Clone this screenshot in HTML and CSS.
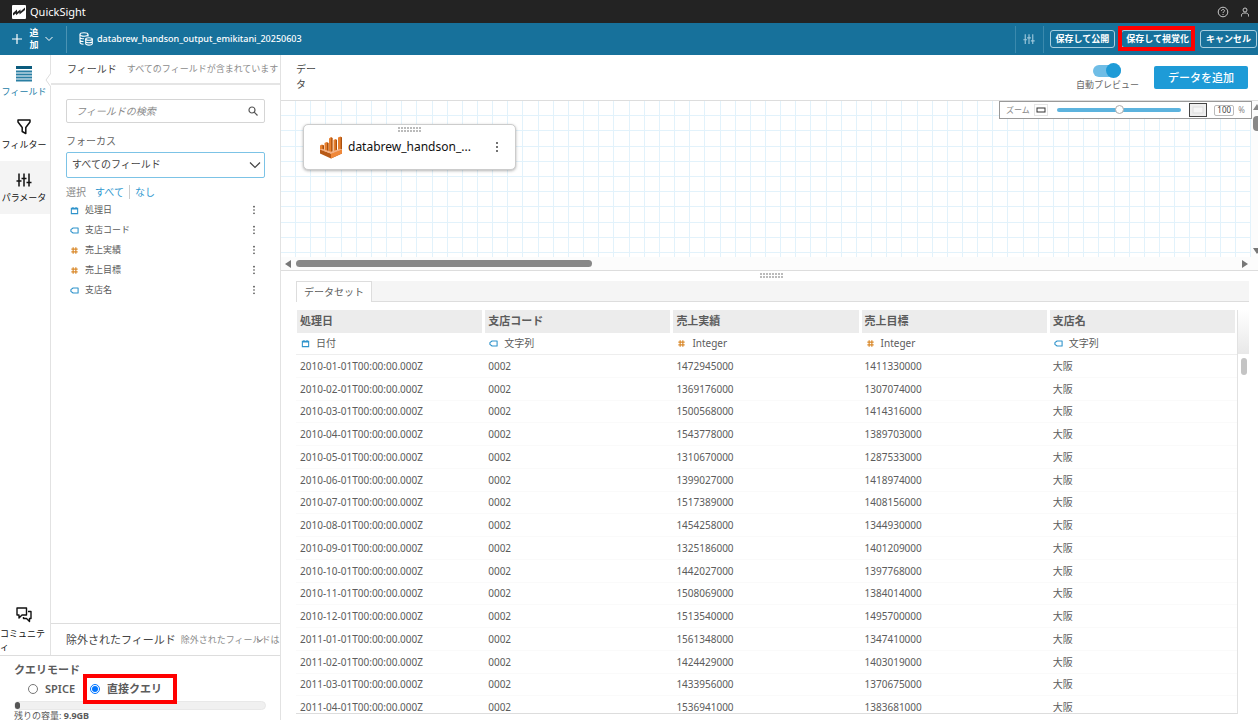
FILE: index.html
```html
<!DOCTYPE html>
<html lang="ja">
<head>
<meta charset="utf-8">
<title>QuickSight</title>
<link rel="stylesheet" href="styles.css">
</head>
<body>
<svg class="sprite" aria-hidden="true">
  <symbol id="i-date" viewBox="0 0 10 10"><path d="M1.500 2.500h7v6h-7z M3.300 1v2 M6.700 1v2 M1.500 3.200h7" fill="none" stroke="#2f93cb" stroke-width="1.200"/></symbol>
  <symbol id="i-text" viewBox="0 0 10 10"><path d="M3.400 2.200h5.600v5.600H3.400L1 6V4z" fill="none" stroke="#2f93cb" stroke-width="1.200" stroke-linejoin="round"/></symbol>
  <symbol id="i-num" viewBox="0 0 10 10"><path d="M3.500 1.500v7 M6.500 1.500v7 M1.500 3.500h7 M1.500 6.500h7" fill="none" stroke="#d9892b" stroke-width="1.300"/></symbol>
  <symbol id="i-more" viewBox="0 0 4 12"><g fill="#444"><circle cx="2" cy="2" r="1"/><circle cx="2" cy="6" r="1"/><circle cx="2" cy="10" r="1"/></g></symbol>
  <symbol id="i-sliders" viewBox="0 0 16 16"><path d="M3 1.500v4 M3 9v5.500 M8 1.500v2 M8 7v7.500 M13 1.500v6 M13 11v3.500 M.5 9h5 M5.500 6.500h5 M10.500 10.500h5 M8 3.500v3 M3 5v4 M13 7v3" fill="none" stroke="currentColor" stroke-width="1.500"/></symbol>
  <symbol id="grip" viewBox="0 0 24 6"><path d="M0 1h24M0 4h24" stroke="#bbb" stroke-width="2" stroke-dasharray="2 1"/></symbol>
</svg>

<header class="brand">
  <svg class="logo" viewBox="0 0 14 14"><rect width="14" height="14" rx="1" fill="#fff"/><path d="M1 10.500V8L5 4.500V7L8.500 4.500V6.500L13 2.500V5L7.500 9.500V7.500L4 10.300V8.500z" fill="#232323"/></svg>
  <span class="brand-name">QuickSight</span>
  <div class="brand-tools">
    <button class="plain" aria-label="ヘルプ"><svg width="12" height="12" viewBox="0 0 12 12" fill="none" stroke="#c8c8c8"><circle cx="6" cy="6" r="4.800"/><path d="M4.500 5c0-2 3-2 3-.2C7.500 5.800 6 5.800 6 7 M6 8v1"/></svg></button>
    <button class="plain" aria-label="アカウント"><svg width="12" height="12" viewBox="0 0 12 12" fill="none" stroke="#c8c8c8"><circle cx="6" cy="4" r="2"/><path d="M2.500 10.500V9.200C2.500 7.500 4 7 6 7s3.500.5 3.500 2.200v1.300"/></svg></button>
  </div>
</header>

<div class="toolbar">
  <button class="plain add">
    <svg width="12" height="12" viewBox="0 0 12 12" stroke="#fff" stroke-width="1.200"><path d="M6 1v10M1 6h10"/></svg>
    <span class="add-label">追加</span>
    <svg width="10" height="8" viewBox="0 0 10 8" fill="none" stroke="#fff"><path d="M1.500 2 5 5.500 8.500 2"/></svg>
  </button>
  <div class="dataset-name">
    <svg width="14" height="14" viewBox="0 0 14 14" fill="none" stroke="#fff" stroke-width="1.100"><ellipse cx="5" cy="2.500" rx="4" ry="1.700"/><path d="M1 2.500v8c0 .8 1.500 1.500 3.500 1.700 M9 2.500v2 M1 5.200c0 1 2 1.600 4 1.600 M1 8c0 .8 1.500 1.500 3.500 1.500"/><ellipse cx="10" cy="7" rx="3.300" ry="1.300"/><path d="M6.700 7v4.800c0 1.700 6.600 1.700 6.600 0V7 M6.700 9.400c0 1.700 6.600 1.700 6.600 0"/></svg>
    <span>databrew_handson_output_emikitani_20250603</span>
  </div>
  <div class="toolbar-right">
    <button class="plain params" aria-label="パラメータ"><svg width="12" height="12"><use href="#i-sliders"/></svg></button>
    <button class="outline">保存して公開</button>
    <button class="outline marked">保存して視覚化</button>
    <button class="outline">キャンセル</button>
  </div>
</div>

<main class="app">
  <aside class="side">
    <div class="side-top">
      <nav class="rail">
        <button class="plain rail-item selected">
          <svg width="16" height="16" viewBox="0 0 16 16"><path d="M0 0h16v3H0z" fill="#0b5b7d"/><path d="M0 4.500h16v2H0z M0 7.500h16v2H0z M0 10.500h16v2H0z M0 13.500h16v2H0z" fill="#2a7fa3"/></svg>
          <span>フィールド</span>
        </button>
        <button class="plain rail-item">
          <svg width="16" height="16" viewBox="0 0 16 16" fill="none" stroke="#111" stroke-width="1.500" stroke-linejoin="round"><path d="M2 1h12v2L9.800 8.500v6L6.200 12.500v-4L2 3z"/></svg>
          <span>フィルター</span>
        </button>
        <button class="plain rail-item shaded">
          <svg width="16" height="16"><use href="#i-sliders"/></svg>
          <span>パラメータ</span>
        </button>
        <button class="plain rail-item community">
          <svg width="16" height="16" viewBox="0 0 16 16" fill="none" stroke="#111" stroke-width="1.400" stroke-linejoin="round"><path d="M1 1h9.500v7H6l-3 3V8H1z"/><path d="M12 4.500h3v7h-1.500v3l-3-3H7.500V10"/></svg>
          <span>コミュニティ</span>
        </button>
      </nav>
      <section class="fields">
        <div class="pane-head">
          <svg class="pointer" width="6" height="14" viewBox="0 0 6 14"><path d="M6 0 1 7l5 7" fill="#fff" stroke="#ddd"/></svg>
          <h2>フィールド</h2><span class="hint">すべてのフィールドが含まれています</span>
        </div>
        <div class="pane-body">
          <div class="search">
            <input type="search" placeholder="フィールドの検索" aria-label="フィールドの検索">
            <svg width="10" height="10" viewBox="0 0 10 10" fill="none" stroke="#555" stroke-width="1.200"><circle cx="4" cy="4" r="3"/><path d="M6.200 6.200 9.500 9.500"/></svg>
          </div>
          <label class="focus-label" for="focus">フォーカス</label>
          <div class="select">
            <select id="focus"><option>すべてのフィールド</option></select>
            <svg width="12" height="8" viewBox="0 0 12 8" fill="none" stroke="#444" stroke-width="1.200"><path d="M1 1.500 6 6.500 11 1.500"/></svg>
          </div>
          <div class="pick"><span>選択</span><a href="#all">すべて</a><a href="#none" class="split">なし</a></div>
          <ul class="field-list">
            <li><svg class="type"><use href="#i-date"/></svg><span>処理日</span><button class="plain" aria-label="メニュー"><svg width="4" height="10"><use href="#i-more"/></svg></button></li>
            <li><svg class="type"><use href="#i-text"/></svg><span>支店コード</span><button class="plain" aria-label="メニュー"><svg width="4" height="10"><use href="#i-more"/></svg></button></li>
            <li><svg class="type"><use href="#i-num"/></svg><span>売上実績</span><button class="plain" aria-label="メニュー"><svg width="4" height="10"><use href="#i-more"/></svg></button></li>
            <li><svg class="type"><use href="#i-num"/></svg><span>売上目標</span><button class="plain" aria-label="メニュー"><svg width="4" height="10"><use href="#i-more"/></svg></button></li>
            <li><svg class="type"><use href="#i-text"/></svg><span>支店名</span><button class="plain" aria-label="メニュー"><svg width="4" height="10"><use href="#i-more"/></svg></button></li>
          </ul>
        </div>
        <div class="excluded">
          <h2>除外されたフィールド</h2><span class="hint">除外されたフィールドは</span>
          <svg class="excluded-arrow" width="8" height="6" viewBox="0 0 8 6" fill="none" stroke="#666"><path d="M1 1.500 4 4.500 7 1.500"/></svg>
        </div>
      </section>
    </div>
    <section class="query">
      <h2>クエリモード</h2>
      <div class="modes">
        <label><input type="radio" name="mode">SPICE</label>
        <label class="direct marked"><input type="radio" name="mode" checked>直接クエリ</label>
      </div>
      <div class="meter"><div class="meter-fill"></div></div>
      <p class="capacity">残りの容量: <b>9.9GB</b></p>
    </section>
  </aside>

  <section class="work">
    <div class="work-head">
      <h1>データ</h1>
      <div class="work-actions">
        <label class="preview"><input type="checkbox" checked><span>自動プレビュー</span></label>
        <button class="primary">データを追加</button>
      </div>
    </div>

    <div class="canvas">
      <div class="grid"></div>
      <div class="node">
        <svg class="dots" width="24" height="6"><use href="#grip"/></svg>
        <svg class="node-icon" width="24" height="24" viewBox="0 0 24 24"><path d="M1 10.500 3 9.500 5 10.500V16L1 14.500z M5.500 8l2-1 2 1v9l-4-1z M10 3.500l2-1.500 1.500 1V18L10 17z M14.500 5l2-1 1.500 1v11l-3.500 1.500z M19 2.500 21.500 1.500 23 2.500V14l-4 1.500z" fill="#e8802f"/><path d="M3.500 10l1.500.5V16l-1.500-.5z M8 7.500l1.500.5v9L8 16.500z M12.200 2.500l1.300.5V18l-1.300-.4z M16.700 4.500 18 5v11l-1.300.5z M21.700 2 23 2.500V14l-1.300.6z" fill="#a9500f"/><path d="M1 14.500 12 18.500 23 14.500V18.500L12 23.500 1 18.500z" fill="#b85a17"/><path d="M12 18.500 23 14.500V18.500L12 23.500z" fill="#f0883a"/><path d="M1 14.500 3 13.800 12 16.800 21 13.800 23 14.500 12 18.700z" fill="#f5b183"/></svg>
        <span class="node-name">databrew_handson_...</span>
        <button class="plain" aria-label="メニュー"><svg width="4" height="12"><use href="#i-more"/></svg></button>
      </div>
      <div class="zoom">
        <span>ズーム</span>
        <button class="plain zoom-min" aria-label="縮小"><svg width="10" height="6"><rect x="1" y="1" width="8" height="4" fill="#fff" stroke="#333"/></svg></button>
        <input type="range" min="0" max="100" value="50" aria-label="ズーム">
        <button class="plain zoom-max" aria-label="拡大"><svg width="12" height="8"><rect x="1" y="1" width="10" height="6" fill="#f5f5f5" stroke="#ddd"/></svg></button>
        <input class="percent" type="text" value="100" aria-label="倍率"><span>%</span>
      </div>
      <div class="vbar"><svg width="8" height="7" viewBox="0 0 8 7"><path d="M0 6 4 0l4 6z" fill="#888"/></svg><i></i><svg class="down" width="8" height="7" viewBox="0 0 8 7"><path d="M0 0h8L4 6z" fill="#777"/></svg></div>
      <div class="hbar"><svg width="6" height="8"><path d="M6 0v8L0 4z" fill="#777"/></svg><div class="track"><i></i></div><svg width="6" height="8"><path d="M0 0v8l6-4z" fill="#777"/></svg></div>
    </div>

    <div class="splitter"><svg width="24" height="6"><use href="#grip"/></svg></div>
    <div class="tabs"><button class="tab">データセット</button></div>
    <div class="results">
      <div class="sheet">
        <table>
          <thead>
            <tr class="names"><th>処理日</th><th>支店コード</th><th>売上実績</th><th>売上目標</th><th>支店名</th></tr>
            <tr class="types">
              <td><svg class="type"><use href="#i-date"/></svg>日付</td>
              <td><svg class="type"><use href="#i-text"/></svg>文字列</td>
              <td><svg class="type"><use href="#i-num"/></svg>Integer</td>
              <td><svg class="type"><use href="#i-num"/></svg>Integer</td>
              <td><svg class="type"><use href="#i-text"/></svg>文字列</td>
            </tr>
          </thead>
          <tbody>
            <tr><td>2010-01-01T00:00:00.000Z</td><td>0002</td><td>1472945000</td><td>1411330000</td><td>大阪</td></tr>
            <tr><td>2010-02-01T00:00:00.000Z</td><td>0002</td><td>1369176000</td><td>1307074000</td><td>大阪</td></tr>
            <tr><td>2010-03-01T00:00:00.000Z</td><td>0002</td><td>1500568000</td><td>1414316000</td><td>大阪</td></tr>
            <tr><td>2010-04-01T00:00:00.000Z</td><td>0002</td><td>1543778000</td><td>1389703000</td><td>大阪</td></tr>
            <tr><td>2010-05-01T00:00:00.000Z</td><td>0002</td><td>1310670000</td><td>1287533000</td><td>大阪</td></tr>
            <tr><td>2010-06-01T00:00:00.000Z</td><td>0002</td><td>1399027000</td><td>1418974000</td><td>大阪</td></tr>
            <tr><td>2010-07-01T00:00:00.000Z</td><td>0002</td><td>1517389000</td><td>1408156000</td><td>大阪</td></tr>
            <tr><td>2010-08-01T00:00:00.000Z</td><td>0002</td><td>1454258000</td><td>1344930000</td><td>大阪</td></tr>
            <tr><td>2010-09-01T00:00:00.000Z</td><td>0002</td><td>1325186000</td><td>1401209000</td><td>大阪</td></tr>
            <tr><td>2010-10-01T00:00:00.000Z</td><td>0002</td><td>1442027000</td><td>1397768000</td><td>大阪</td></tr>
            <tr><td>2010-11-01T00:00:00.000Z</td><td>0002</td><td>1508069000</td><td>1384014000</td><td>大阪</td></tr>
            <tr><td>2010-12-01T00:00:00.000Z</td><td>0002</td><td>1513540000</td><td>1495700000</td><td>大阪</td></tr>
            <tr><td>2011-01-01T00:00:00.000Z</td><td>0002</td><td>1561348000</td><td>1347410000</td><td>大阪</td></tr>
            <tr><td>2011-02-01T00:00:00.000Z</td><td>0002</td><td>1424429000</td><td>1403019000</td><td>大阪</td></tr>
            <tr><td>2011-03-01T00:00:00.000Z</td><td>0002</td><td>1433956000</td><td>1370675000</td><td>大阪</td></tr>
            <tr><td>2011-04-01T00:00:00.000Z</td><td>0002</td><td>1536941000</td><td>1383681000</td><td>大阪</td></tr>
          </tbody>
        </table>
      </div>
      <div class="sheet-bar"><div class="corner"></div><i></i></div>
    </div>
  </section>
</main>
</body>
</html>
```
FILE: styles.css
```css
* { box-sizing: border-box; }
html, body { height: 100%; }
body {
  margin: 0;
  display: flex;
  flex-direction: column;
  overflow: hidden;
  background: #fff;
  color: #5c5c5c;
  font: 10px/14px "Noto Sans", "Noto Sans CJK JP", sans-serif;
}
button, input, select { font: inherit; color: inherit; }
h1, h2, p, ul { margin: 0; padding: 0; font-size: 10px; font-weight: 400; }
svg { display: block; flex: none; }
a { color: #2f98cf; text-decoration: none; }
.sprite { position: absolute; width: 0; height: 0; }
.plain { border: 0; background: none; padding: 0; }

/* Brand strip */
.brand {
  flex: none;
  height: 23px;
  display: flex;
  align-items: center;
  gap: 4px;
  padding: 0 7px 0 12px;
  background: #232323;
}
.logo { width: 14px; height: 14px; }
.brand-name { color: #fff; font-size: 11px; }
.brand-tools { margin-left: auto; display: flex; gap: 10px; }

/* Toolbar */
.toolbar {
  flex: none;
  height: 32px;
  display: flex;
  align-items: center;
  padding-right: 1px;
  background: #17719b;
  color: #fff;
}
.add {
  width: 67px;
  height: 27px;
  display: flex;
  align-items: center;
  padding-left: 11px;
  gap: 5px;
  border-right: 1px solid #4b93b4;
}
.add-label { width: 10px; font-size: 9px; font-weight: 700; line-height: 12px; margin-left: 1px; }
.dataset-name { display: flex; align-items: center; gap: 4px; padding-left: 12px; font-size: 9px; font-weight: 500; }
.toolbar-right { margin-left: auto; display: flex; align-items: center; gap: 6px; }
.params {
  width: 29px;
  height: 27px;
  display: grid;
  place-items: center;
  color: #9fc8dc;
  border: solid #3b89ad;
  border-width: 0 1px;
}
.outline {
  height: 18px;
  padding: 0 5px;
  border: 1px solid #a9cfe0;
  border-radius: 3px;
  background: none;
  font-size: 9px;
  line-height: 12px;
  font-weight: 700;
  white-space: nowrap;
}
.marked { position: relative; }
.marked::after { content: ""; position: absolute; border: 4px solid #f00; pointer-events: none; }
.outline.marked { padding: 0 4px; }
.outline.marked::after { inset: -5px -2px -4px -4px; }

/* Page body */
.app { flex: 1; min-height: 0; display: flex; }
.side { width: 281px; flex: none; display: flex; flex-direction: column; border-right: 1px solid #e2e2e2; }
.side-top { flex: 1; min-height: 0; display: flex; border-bottom: 1px solid #ddd; }

.rail { width: 51px; flex: none; display: flex; flex-direction: column; border-right: 1px solid #e2e2e2; }
.rail-item {
  height: 53px;
  display: flex;
  flex-direction: column;
  align-items: center;
  padding: 11px 2px 0 0;
  gap: 4px;
  color: #111;
  font-size: 9px;
  line-height: 12px;
  white-space: nowrap;
}
.rail-item.selected { color: #2480a8; }
.rail-item.shaded { background: #f4f4f4; }
.rail-item.community { margin-top: auto; height: 49px; padding-top: 1px; white-space: normal; line-height: 13px; }
.community span { width: 48px; text-align: left; word-break: break-all; }

.fields { flex: 1; min-width: 0; display: flex; flex-direction: column; }
.pane-head, .excluded {
  position: relative;
  flex: none;
  height: 30px;
  display: flex;
  align-items: center;
  gap: 10px;
  padding-left: 16px;
  white-space: nowrap;
}
.pane-head { border-bottom: 2px solid #e5e5e5; }
.pane-head h2, .excluded h2 { color: #444; flex: none; }
.excluded h2 { font-size: 11px; }
.hint { font-size: 9px; color: #8c8c8c; }
.pointer { position: absolute; left: -6px; top: 18px; }
.pane-body { flex: 1; padding: 14px 15px; }
.search, .select { position: relative; display: flex; align-items: center; }
.search input {
  width: 100%;
  height: 24px;
  padding: 0 9px;
  border: 1px solid #d5d5d5;
  border-radius: 2px;
  outline: 0;
  appearance: none;
}
.search input::placeholder { color: #888; font-style: italic; opacity: 1; }
.search svg { position: absolute; right: 7px; }
.focus-label { display: block; margin: 11px 0 4px; color: #666; }
.select select {
  width: 100%;
  height: 26px;
  padding: 0 5px 2px;
  border: 1px solid #7cc3e6;
  border-radius: 2px;
  background: #fff;
  color: #444;
  appearance: none;
}
.select svg { position: absolute; right: 4px; pointer-events: none; }
.pick { display: flex; gap: 9px; margin-top: 7px; color: #888; }
.pick .split { margin-left: -4px; padding-left: 5px; border-left: 1px solid #ccc; }
.field-list { list-style: none; margin-top: 1px; }
.field-list li { height: 20px; display: flex; align-items: center; gap: 6px; padding: 0 9px 0 4px; font-size: 9px; }
.field-list button { margin-left: auto; }
.type { width: 9px; height: 9px; }
.excluded { height: 32px; gap: 5px; padding-left: 15px; border-top: 1px solid #ddd; }
.excluded-arrow { position: absolute; right: 16px; }

/* Query mode */
.query { height: 64px; flex: none; padding: 7px 14px 0; }
.query h2 { font-size: 11px; font-weight: 700; color: #5c5c5c; }
.modes { display: flex; gap: 15px; padding-left: 14px; height: 24px; align-items: center; font-size: 11px; font-weight: 600; }
.modes label { display: flex; align-items: center; gap: 7px; }
.modes input { width: 10px; height: 10px; margin: 0; }
.direct.marked::after { inset: -8px -15px -8px -7px; }
.meter { height: 9px; border-radius: 5px; background: #f0f0f0; border: 1px solid #e8e8e8; }
.meter-fill { width: 5px; height: 7px; border-radius: 3px; background: #555; }
.capacity { font-size: 9px; line-height: 12px; }

/* Workspace */
.work { flex: 1; min-width: 0; display: flex; flex-direction: column; }
.work-head {
  flex: none;
  height: 46px;
  display: flex;
  justify-content: space-between;
  padding: 7px 10px 0 15px;
  border-bottom: 1px solid #ddd;
}
.work-head h1 { width: 24px; line-height: 15px; color: #444; word-break: break-all; }
.work-actions { display: flex; gap: 15px; align-items: flex-start; }
.preview { display: flex; flex-direction: column; align-items: center; font-size: 9px; color: #666; }
.preview input {
  appearance: none;
  position: relative;
  width: 28px;
  height: 12px;
  margin: 3px 0 1px;
  border-radius: 6px;
  background: #6fbde6;
}
.preview input::after {
  content: "";
  position: absolute;
  right: 0;
  top: -2px;
  width: 15px;
  height: 15px;
  border-radius: 50%;
  background: #1e9bd7;
}
.primary {
  height: 23px;
  margin-top: 4px;
  padding: 0 14px;
  border: 0;
  border-radius: 2px;
  background: #1e9bd7;
  color: #fff;
  font-size: 11px;
  font-weight: 500;
}

.canvas { position: relative; flex: none; height: 170px; border-bottom: 1px solid #ddd; background: #fcfcfc; }
.grid {
  height: 156px;
  margin-right: 7px;
  background:
    repeating-linear-gradient(to right, transparent 0 calc(1.5625% - 1px), #e2f2fb calc(1.5625% - 1px) 1.5625%),
    repeating-linear-gradient(to bottom, transparent 0 calc(9.75% - 1px), #e2f2fb calc(9.75% - 1px) 9.75%),
    #fff;
}
.node {
  position: absolute;
  left: 22px;
  top: 23px;
  width: 213px;
  height: 46px;
  display: flex;
  align-items: center;
  padding: 0 16px 0 15px;
  border: 1px solid #ccc;
  border-radius: 5px;
  background: #fff;
  box-shadow: 0 1px 3px rgba(0, 0, 0, .3);
  color: #111;
  font-size: 12px;
}
.node .dots { position: absolute; left: 94px; top: 2px; }
.node-name { margin: 0 auto 0 5px; }
.zoom {
  position: absolute;
  right: 6px;
  top: 0;
  width: 253px;
  height: 18px;
  display: flex;
  align-items: center;
  gap: 4px;
  padding: 0 6px;
  border: 1px solid #999;
  background: #fff;
  color: #888;
  font-size: 8px;
}
.zoom-min { padding: 2px 1px; border: 1px solid #e5e5e5; }
.zoom-max { padding: 2px; border: 1px solid #444; background: #eee; margin-left: 4px; }
.zoom input[type="range"] { flex: 1; min-width: 0; height: 12px; margin: 0 0 0 5px; appearance: none; background: none; }
.zoom input[type="range"]::-webkit-slider-runnable-track { height: 4px; border-radius: 2px; background: #5cb3de; }
.zoom input[type="range"]::-webkit-slider-thumb {
  appearance: none;
  width: 9px;
  height: 9px;
  margin-top: -3px;
  border: 1px solid #aaa;
  border-radius: 50%;
  background: #fff;
}
.percent { width: 20px; height: 11px; margin-left: 3px; padding: 0 2px; border: 1px solid #bbb; border-radius: 2px; color: #444; }
.vbar { position: absolute; right: -3px; top: 3px; width: 8px; height: 151px; display: flex; flex-direction: column; gap: 5px; }
.vbar i { width: 8px; height: 15px; border-radius: 4px; background: #888; }
.vbar .down { margin-top: auto; }
.hbar { height: 13px; display: flex; align-items: center; gap: 5px; padding: 0 10px 0 4px; }
.track { flex: 1; }
.track i { display: block; width: 31.5%; height: 7px; border-radius: 4px; background: #888; }

.splitter { flex: none; height: 10px; display: grid; place-items: center; padding-left: 4px; }
.tabs { flex: none; height: 21px; margin: 0 9px 0 15px; display: flex; background: #f5f5f5; box-shadow: inset 0 -1px #ddd; }
.tab { padding: 0 7px; border: 1px solid #ddd; border-bottom: 0; background: #fff; }

.results { flex: 1; min-height: 0; display: flex; margin: 8px 9px 6px 15px; }
.sheet { flex: 1; overflow: hidden; border-right: 1px solid #e2e2e2; border-bottom: 1px solid #ddd; }
table { width: 100%; height: 409px; table-layout: fixed; border-collapse: separate; border-spacing: 0; }
th, td { padding: 0 0 0 4px; text-align: left; }
.names { height: 23px; }
.names th { padding: 0 0 2px 3px; border-right: 2px solid #fff; border-left: 1px solid #fff; background: #ececec; color: #5c5c5c; font-size: 11px; font-weight: 700; }
.types { height: 22px; }
.types td { padding: 0 0 1px 5px; border-bottom: 1px solid #eee; white-space: nowrap; }
.types .type { display: inline-block; vertical-align: -1px; margin-right: 6px; }
tbody td { border-bottom: 1px solid #fafafa; }
.sheet-bar { width: 11px; flex: none; }
.corner { height: 44px; background: linear-gradient(#fff, #e8e8e8); }
.sheet-bar i { display: block; width: 6px; height: 17px; margin: 4px 0 0 3px; border-radius: 3px; background: #c4c4c4; }
```
